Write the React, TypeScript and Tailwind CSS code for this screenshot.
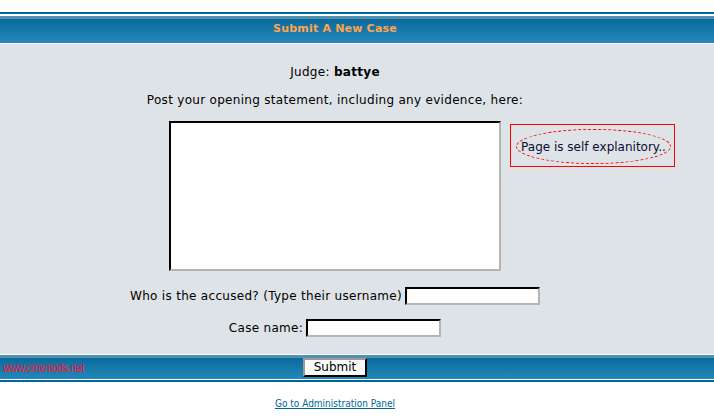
export default function App() {
  const band =
    'bg-[linear-gradient(to_bottom,#5390b0_0px,#5390b0_3px,#0a6a9c_3px,#2688ba_100%)]';
  const inset =
    'border-2 border-t-black border-l-black border-r-[#b4b4b4] border-b-[#b4b4b4] bg-white';

  return (
    <div className="w-[714px] h-[416px] overflow-hidden bg-white font-['DejaVu_Sans',Verdana,sans-serif] text-black">
      <div className="h-[12px]" />
      <div className="h-[2px] bg-[#006699]" />
      <div className="h-[2px]" />

      {/* header */}
      <div className={`h-[27px] ${band}`}>
        <div className="w-[670px] h-full flex items-center justify-center">
          <span className="text-[11px] font-bold tracking-[0.2px] text-[#ffa34f]">Submit A New Case</span>
        </div>
      </div>
      <div className="h-[1px]" />

      {/* body */}
      <div className="relative h-[310px] bg-[#dee3e7]">
        <div className="w-[670px] flex flex-col items-center pt-[21px] text-[12px] leading-[15px] tracking-[0.3px]">
          <div>
            Judge: <b>battye</b>
          </div>
          <div className="mt-[13px]">Post your opening statement, including any evidence, here:</div>
          <textarea className={`mt-[13px] w-[332px] h-[150px] resize-none outline-none ${inset}`} />
          <div className="mt-[16px] flex items-center gap-[3px]">
            <span>Who is the accused? (Type their username)</span>
            <input className={`w-[135px] h-[18px] outline-none ${inset}`} />
          </div>
          <div className="mt-[14px] flex items-center gap-[3px]">
            <span>Case name:</span>
            <input className={`w-[135px] h-[18px] outline-none ${inset}`} />
          </div>
        </div>

        {/* annotation */}
        <div className="absolute left-[510px] top-[80px] w-[165px] h-[43px] border border-[#ff0000]">
          <div className="absolute left-[5px] top-[4px] w-[155px] h-[35px] rounded-[50%] border border-dashed border-[#ff0000] flex items-center justify-center text-[12px] text-[#0c0c30]">
            Page is self explanitory..
          </div>
        </div>
      </div>
      <div className="h-[1px]" />

      {/* footer */}
      <div className={`relative h-[24px] ${band}`}>
        <span className="absolute left-[3px] top-[3px] origin-left scale-x-[0.78] text-[13px] tracking-[-0.3px] text-[#ff1030] font-['Liberation_Sans',Arial,sans-serif]">
          www.cmxmods.net
        </span>
        <div className="w-[670px] h-full flex items-center justify-center">
          <button className="w-[64px] h-[19px] bg-[#fafafa] border-2 border-t-[#9a9a9a] border-l-[#9a9a9a] border-r-black border-b-black text-[12px] leading-none">
            Submit
          </button>
        </div>
      </div>
      <div className="h-[1px]" />
      <div className="h-[2px] bg-[#006699]" />

      <div className="w-[670px] flex justify-center pt-[14px]">
        <a
          href="#"
          className="text-[10px] text-[#006699] underline font-['DejaVu_Sans_Condensed','DejaVu_Sans',sans-serif]"
        >
          Go to Administration Panel
        </a>
      </div>
    </div>
  );
}
